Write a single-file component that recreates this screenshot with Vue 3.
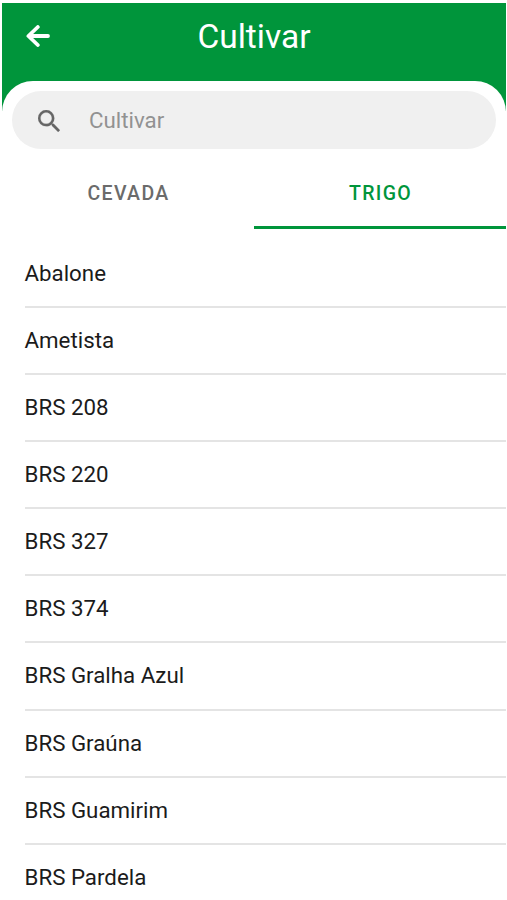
<template>
  <div class="screen">
    <header class="toolbar">
      <button class="back" aria-label="Voltar">
        <svg viewBox="0 0 24 22" width="24" height="22">
          <path d="M11.8 2 L2.4 11 L11.8 20 M3 11 H22" />
        </svg>
      </button>
      <h1>Cultivar</h1>
    </header>

    <main class="sheet">
      <label class="search">
        <svg viewBox="3 3 17.49 17.49" width="22" height="22">
          <path d="M15.5 14h-.79l-.28-.27A6.471 6.471 0 0 0 16 9.5 6.5 6.5 0 1 0 9.5 16c1.61 0 3.09-.59 4.23-1.57l.27.28v.79l5 4.99L20.49 19l-4.99-5zm-6 0C7.01 14 5 11.99 5 9.5S7.01 5 9.5 5 14 7.01 14 9.5 11.99 14 9.5 14z" />
        </svg>
        <input v-model="search" type="text" placeholder="Cultivar" />
      </label>

      <nav class="tabs">
        <button
          v-for="tab in tabs"
          :key="tab"
          class="tab"
          :class="{ active: tab === activeTab }"
          @click="activeTab = tab"
        >
          {{ tab }}
        </button>
      </nav>

      <ul class="list">
        <li v-for="item in filteredItems" :key="item">{{ item }}</li>
      </ul>
    </main>
  </div>
</template>

<script setup>
import { ref, computed } from 'vue'

const tabs = ['CEVADA', 'TRIGO']
const activeTab = ref('TRIGO')
const search = ref('')

const cultivars = {
  CEVADA: [],
  TRIGO: [
    'Abalone',
    'Ametista',
    'BRS 208',
    'BRS 220',
    'BRS 327',
    'BRS 374',
    'BRS Gralha Azul',
    'BRS Graúna',
    'BRS Guamirim',
    'BRS Pardela',
  ],
}

const filteredItems = computed(() =>
  cultivars[activeTab.value].filter((item) =>
    item.toLowerCase().includes(search.value.toLowerCase())
  )
)
</script>

<style>
body {
  margin: 0;
  background: #fff;
}
</style>

<style scoped>
.screen {
  box-sizing: border-box;
  height: 900px;
  padding: 2.5px 1px 0 2px;
  overflow: hidden;
  background: #fff;
  font-family: Roboto, "Liberation Sans", sans-serif;
}

.toolbar {
  display: grid;
  grid-template-columns: 72px 1fr 72px;
  align-items: center;
  box-sizing: border-box;
  height: 108px;
  padding-bottom: 41px;
  background: #00953b;
  color: #fff;
}

button {
  padding: 0;
  border: 0;
  background: none;
  font-family: inherit;
  cursor: pointer;
}

.back {
  display: flex;
  padding-left: 24px;
}

.back path {
  fill: none;
  stroke: #fff;
  stroke-width: 3.8;
  stroke-linecap: round;
  stroke-linejoin: round;
}

h1 {
  margin: 0;
  font-size: 33.5px;
  font-weight: 400;
  line-height: 41px;
  text-align: center;
}

.sheet {
  margin-top: -30px;
  padding-top: 10.5px;
  border-radius: 31px 31px 0 0;
  background: #fff;
}

.search {
  display: flex;
  align-items: center;
  box-sizing: border-box;
  height: 58px;
  margin: 0 10px;
  padding: 0 26px;
  border-radius: 29px;
  background: #f0f0f0;
}

.search svg {
  flex: none;
  margin-top: 1px;
  fill: #666;
  stroke: #666;
  stroke-width: 0.15;
}

.search input {
  flex: 1;
  min-width: 0;
  margin-left: 29px;
  padding: 0;
  border: 0;
  outline: 0;
  background: none;
  color: #222;
  font-family: inherit;
  font-size: 22.3px;
}

.search input::placeholder {
  color: #929292;
  opacity: 1;
}

.tabs {
  display: flex;
  height: 80px;
}

.tab {
  flex: 1;
  padding: 11px 0 0 1px;
  border-bottom: 3px solid transparent;
  color: #6b6b6b;
  font-size: 19.5px;
  font-weight: 500;
  letter-spacing: 1.35px;
}

.tab.active {
  border-bottom-color: #00953b;
  color: #00953b;
}

.list {
  margin: 11.6px 0 0;
  padding: 0 0 0 22.5px;
  list-style: none;
}

.list li {
  box-sizing: border-box;
  height: 67.15px;
  border-bottom: 2px solid #e4e4e4;
  color: #1b1b1b;
  font-size: 22.3px;
  line-height: 65px;
}
</style>
